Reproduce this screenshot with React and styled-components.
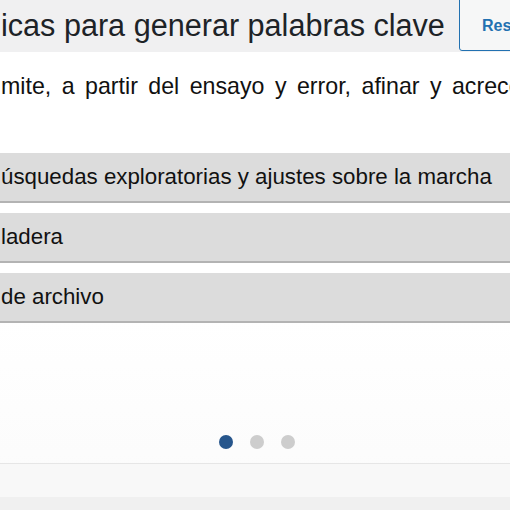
import styled, { createGlobalStyle } from "styled-components";

const GlobalStyle = createGlobalStyle`
    html, body {
        margin: 0;
        padding: 0;
        background: #ffffff;
        font-family: "Liberation Sans", Arial, sans-serif;
        overflow: hidden;
    }
`;

const Page = styled.div`
    width: 510px;
    height: 510px;
    overflow: hidden;
    display: flex;
    flex-direction: column;
    background: #ffffff;
`;

const Header = styled.header`
    display: flex;
    flex: 0 0 52px;
    background: #f0f0f1;
    overflow: hidden;
`;

const Title = styled.h1`
    flex: 0 0 459px;
    margin: 0;
    padding: 0 0 0 1px;
    box-sizing: border-box;
    font-size: 30.6px;
    font-weight: 400;
    line-height: 50px;
    color: #1d2327;
    white-space: nowrap;
    overflow: hidden;
`;

const ResetButton = styled.button`
    flex: 0 0 90px;
    height: 56px;
    margin-top: -5px;
    padding: 5px 0 0 22px;
    box-sizing: border-box;
    display: flex;
    align-items: center;
    background: #f6f7f7;
    border: 1px solid #2271b1;
    border-radius: 3px;
    color: #2271b1;
    font-family: inherit;
    font-size: 16px;
    font-weight: 700;
    white-space: nowrap;
    overflow: hidden;
`;

const Content = styled.main`
    flex: 1;
    display: flex;
    flex-direction: column;
    padding-left: 1px;
    background: linear-gradient(#ffffff 60%, #fbfbfb);
`;

const Intro = styled.p`
    margin: 17px 0 0;
    font-size: 23.2px;
    line-height: 34px;
    word-spacing: 4px;
    color: #111111;
    white-space: nowrap;
    overflow: hidden;
`;

const Accordion = styled.div`
    display: flex;
    flex-direction: column;
    gap: 10px;
    margin-top: 50px;
    margin-left: -1px;
`;

const Row = styled.div`
    height: 48px;
    padding-left: 1px;
    background: #dcdcdc;
    border-bottom: 2px solid #b3b3b3;
    font-size: 22.3px;
    line-height: 48px;
    color: #111111;
    white-space: nowrap;
    overflow: hidden;
`;

const Dots = styled.div`
    display: flex;
    justify-content: center;
    gap: 17px;
    margin-top: 112px;
    padding-left: 3px;
`;

const Dot = styled.span`
    width: 14px;
    height: 14px;
    border-radius: 50%;
    background: ${(p) => (p.$active ? "#27568c" : "#cdcdcd")};
`;

const Footer = styled.footer`
    margin-top: 14px;
    margin-left: -1px;
    height: 33px;
    background: #f8f8f8;
    border-top: 1px solid #e6e6e6;
`;

const BottomBar = styled.div`
    flex: 0 0 14px;
    background: #f0f0f0;
`;

const items = [
    "úsquedas exploratorias y ajustes sobre la marcha",
    "ladera",
    "de archivo",
];

export default function App() {
    return (
        <Page>
            <GlobalStyle />
            <Header>
                <Title>icas para generar palabras clave</Title>
                <ResetButton>Restablecer</ResetButton>
            </Header>
            <Content>
                <Intro>mite, a partir del ensayo y error, afinar y acrecentar</Intro>
                <Accordion>
                    {items.map((text) => (
                        <Row key={text}>{text}</Row>
                    ))}
                </Accordion>
                <Dots>
                    <Dot $active />
                    <Dot />
                    <Dot />
                </Dots>
                <Footer />
            </Content>
            <BottomBar />
        </Page>
    );
}
